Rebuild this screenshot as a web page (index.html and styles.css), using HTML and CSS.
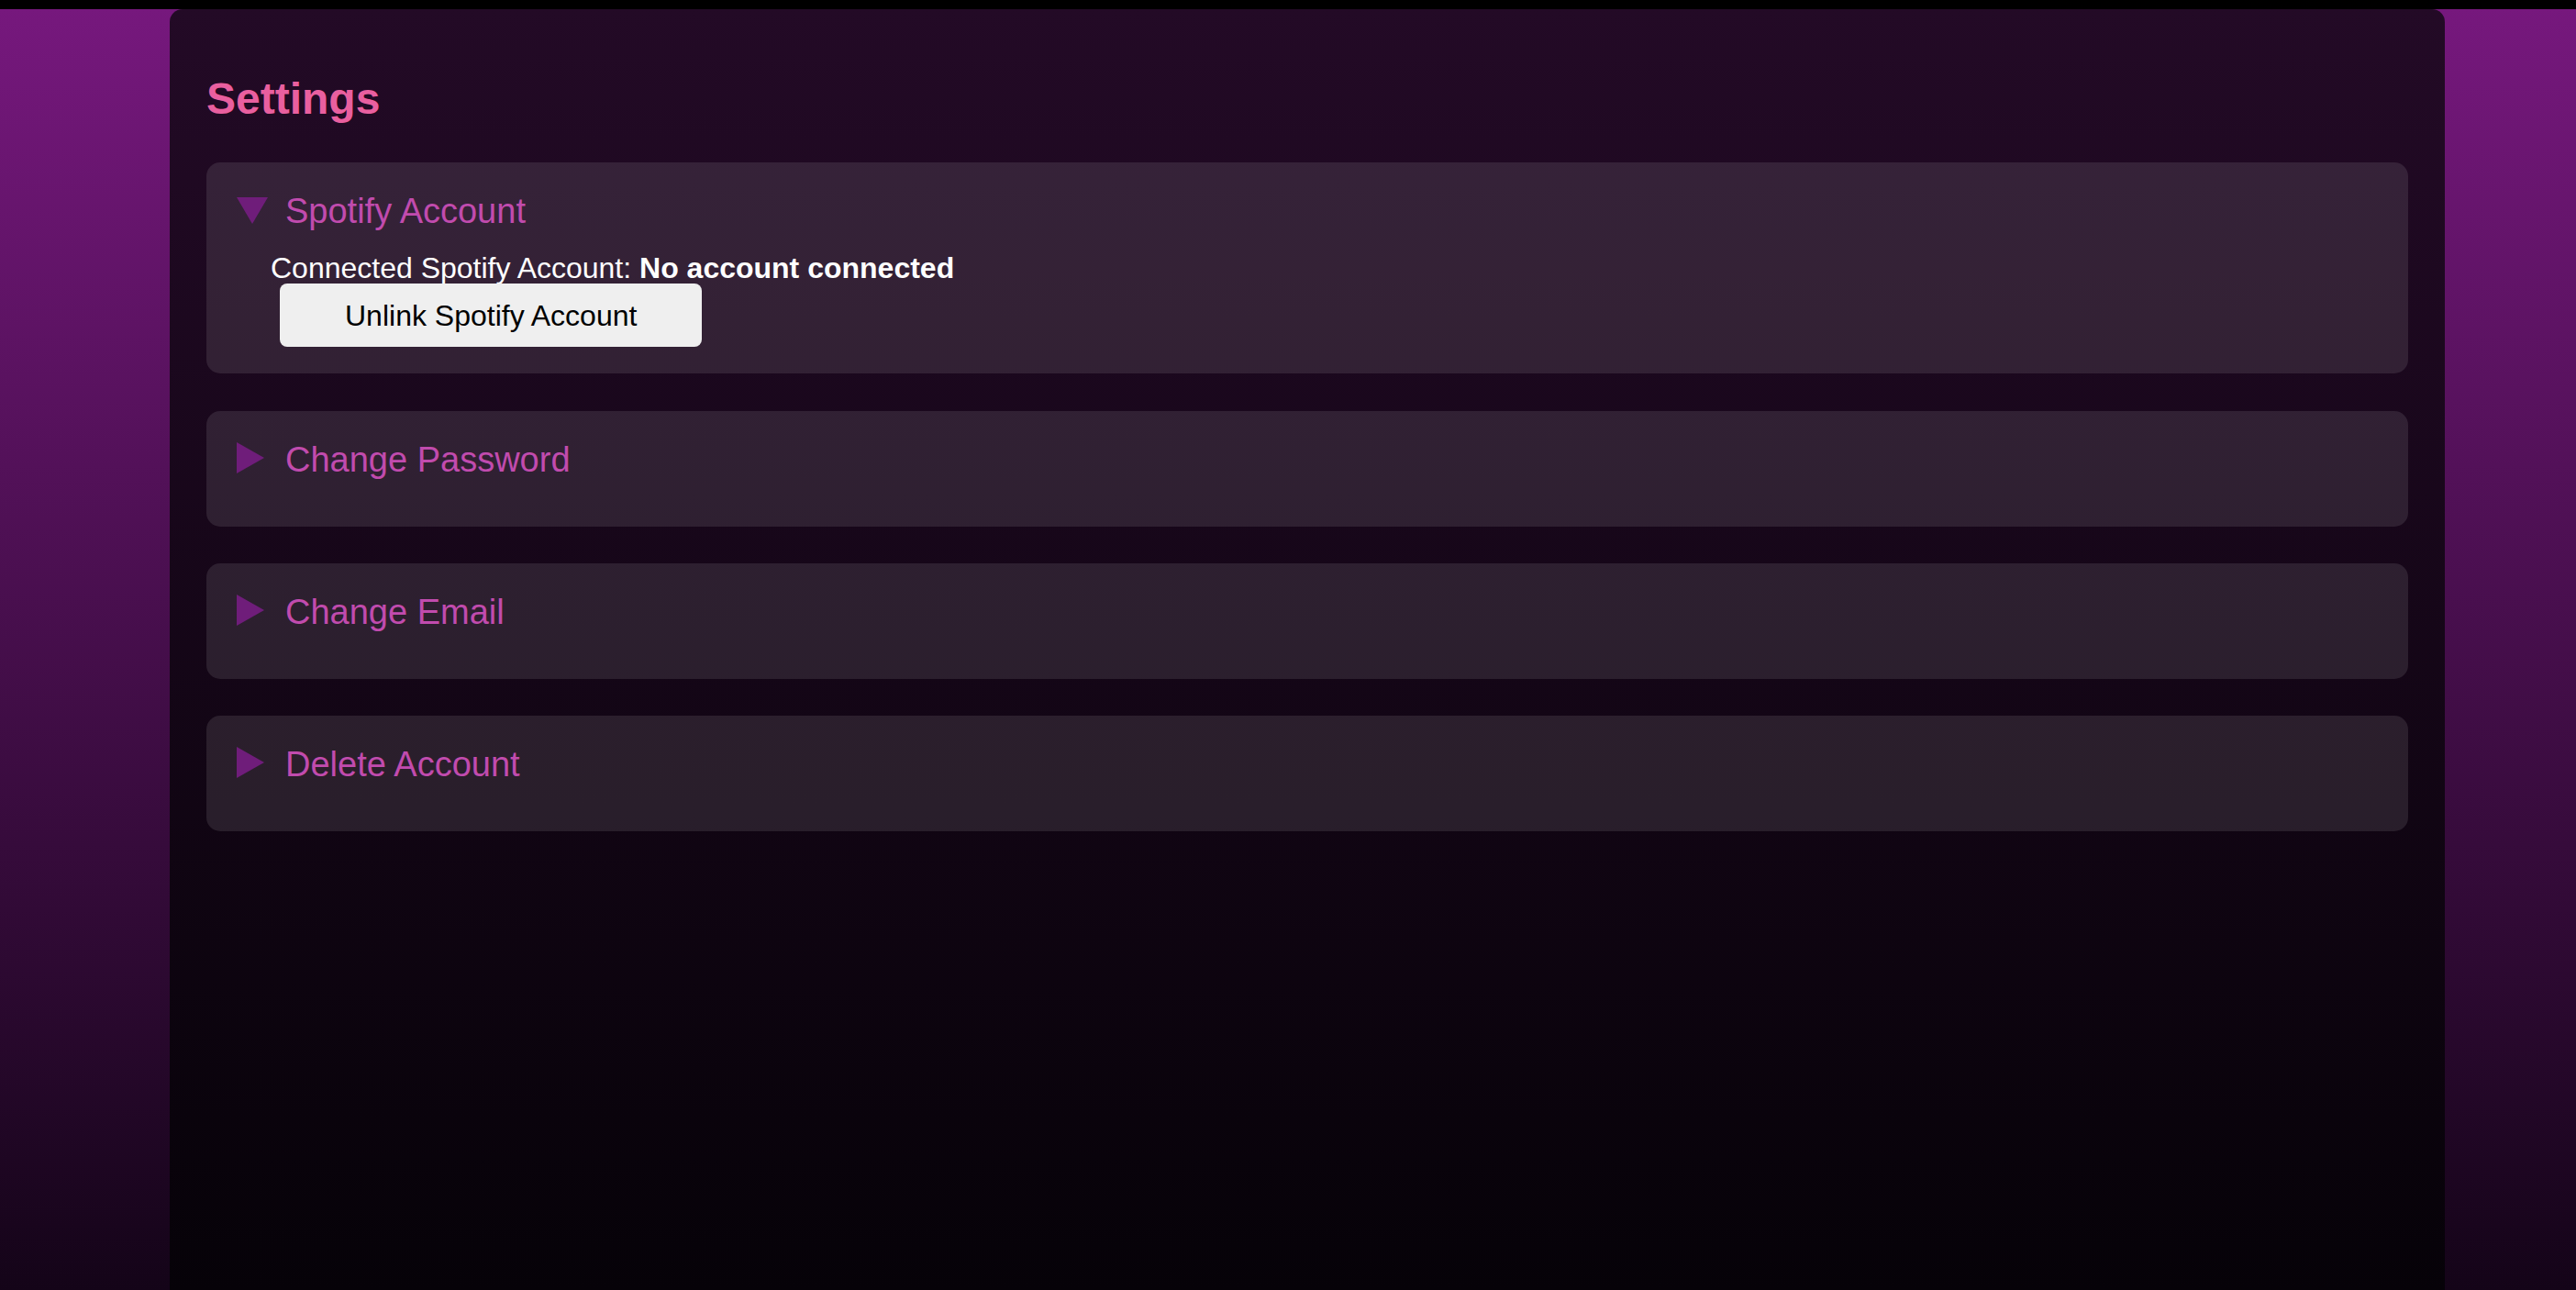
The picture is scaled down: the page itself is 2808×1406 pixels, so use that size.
FILE: index.html
```html
<!DOCTYPE html>
<html lang="en">
<head>
<meta charset="utf-8">
<title>Settings</title>
<link rel="stylesheet" href="styles.css">
</head>
<body>
<div class="topbar"></div>
<div class="page">
  <main class="panel">
    <h1 class="title">Settings</h1>

    <details class="section" open>
      <summary class="summary">
        <svg class="marker marker-open" width="34" height="29" viewBox="0 0 34 29"><polygon points="0,0 34,0 17,29" fill="#6f1d7a"/></svg>
        <span class="summary-text">Spotify Account</span>
      </summary>
      <div class="content">
        <p class="connected">Connected Spotify Account: <strong>No account connected</strong></p>
        <button class="btn" type="button">Unlink Spotify Account</button>
      </div>
    </details>

    <details class="section">
      <summary class="summary">
        <svg class="marker marker-closed" width="30" height="34" viewBox="0 0 30 34"><polygon points="0,0 30,17 0,34" fill="#6f1d7a"/></svg>
        <span class="summary-text">Change Password</span>
      </summary>
    </details>

    <details class="section">
      <summary class="summary">
        <svg class="marker marker-closed" width="30" height="34" viewBox="0 0 30 34"><polygon points="0,0 30,17 0,34" fill="#6f1d7a"/></svg>
        <span class="summary-text">Change Email</span>
      </summary>
    </details>

    <details class="section">
      <summary class="summary">
        <svg class="marker marker-closed" width="30" height="34" viewBox="0 0 30 34"><polygon points="0,0 30,17 0,34" fill="#6f1d7a"/></svg>
        <span class="summary-text">Delete Account</span>
      </summary>
    </details>
  </main>
</div>
</body>
</html>
```
FILE: styles.css
```css
html, body {
  margin: 0;
  padding: 0;
  height: 100%;
  overflow: hidden;
}

body {
  font-family: "Liberation Sans", Arial, sans-serif;
  background: #000;
}

.topbar {
  height: 10px;
  background: #000;
}

.page {
  height: 1396px;
  box-sizing: border-box;
  display: flex;
  padding: 0 143px 0 185px;
  background: linear-gradient(to bottom, #76187d 0%, #140418 100%);
}

.panel {
  flex: 1;
  box-sizing: border-box;
  padding: 0 40px;
  border-radius: 14px 14px 0 0;
  background: linear-gradient(to bottom, #230a26 0%, #060208 100%);
}

.title {
  margin: 70px 0 42px;
  font-size: 48px;
  font-weight: 700;
  line-height: 55px;
  color: #e95f9f;
}

.section {
  margin: 0 0 40px;
  padding: 31px 33px 28px;
  border-radius: 15px;
  background: rgba(255, 255, 255, 0.1);
}

.section[open] {
  margin-bottom: 41px;
  padding-bottom: 29px;
}

.summary {
  display: flex;
  align-items: flex-start;
  gap: 19px;
  margin-bottom: 23px;
  list-style: none;
  cursor: pointer;
  font-size: 38px;
  line-height: 44px;
  color: #c14bae;
}

.summary::-webkit-details-marker {
  display: none;
}

.section[open] > .summary {
  margin-bottom: 22px;
}

.marker {
  flex: 0 0 auto;
}

.marker-closed {
  margin-top: 3px;
  margin-right: 4px;
}

.marker-open {
  margin-top: 7px;
}

.content {
  display: flex;
  flex-direction: column;
  align-items: flex-start;
  padding-left: 37px;
}

.connected {
  margin: 0;
  font-size: 32px;
  line-height: 37px;
  color: #ffffff;
}

.connected strong {
  font-weight: 700;
}

.btn {
  margin: -2px 0 0 10px;
  padding: 17px 71px 15px;
  border: none;
  border-radius: 8px;
  background: #efefef;
  color: #000;
  font-family: "Liberation Sans", Arial, sans-serif;
  font-size: 32px;
  line-height: 37px;
}
```
